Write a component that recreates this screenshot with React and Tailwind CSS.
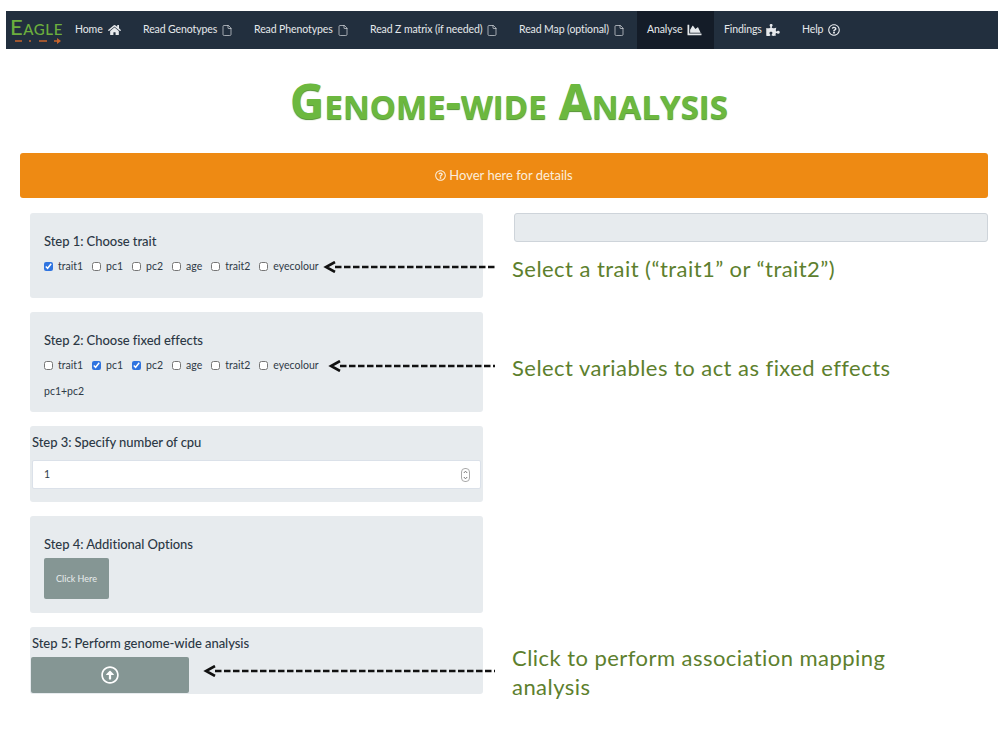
import { File } from 'lucide-react';
import { FaHome, FaChartArea, FaPuzzlePiece, FaRegQuestionCircle, FaRegArrowAltCircleUp } from 'react-icons/fa';

const traits = ['trait1', 'pc1', 'pc2', 'age', 'trait2', 'eyecolour'];

function NavItem({ label, icon, active, className }) {
  return (
    <div className={`flex h-full items-center gap-[4px] text-[10.5px] tracking-[-0.1px] text-[#e6e9ec] ${active ? 'bg-[#141c28]' : ''} ${className}`}>
      <span>{label}</span>
      {icon}
    </div>
  );
}

function Navbar() {
  const file = <File className="h-[13px] w-[12px]" strokeWidth={1.3} />;
  return (
    <div className="ml-[6px] mt-[11px] flex h-[38px] w-[992px] items-center bg-[#222f3e]">
      <div className="flex h-full w-[59px] flex-col pl-[4px] pt-[4px]">
        <span className="text-[22px] font-medium leading-[23px] tracking-[0.6px] text-[#6cae3d] [font-variant-caps:small-caps]">Eagle</span>
        <svg width="46" height="6" viewBox="0 0 46 6" className="ml-[5px]">
          <path d="M0 3h7M14 3h2M24 3h8M39 3h3" stroke="#c8642c" strokeWidth="1.5" />
          <path d="M42 0l4 3-4 3z" fill="#c8642c" />
        </svg>
      </div>
      <NavItem label="Home" icon={<FaHome className="ml-[1px] h-[12px] w-[13px]" />} className="w-[78px] pl-[10px]" />
      <NavItem label="Read Genotypes" icon={file} className="w-[111px]" />
      <NavItem label="Read Phenotypes" icon={file} className="w-[116px]" />
      <NavItem label="Read Z matrix (if needed)" icon={file} className="w-[149px]" />
      <NavItem label="Read Map (optional)" icon={file} className="w-[118px]" />
      <NavItem label="Analyse" icon={<FaChartArea className="h-[14px] w-[17px]" />} active className="w-[77px] pl-[10px]" />
      <NavItem label="Findings" icon={<FaPuzzlePiece className="h-[12px] w-[14px]" />} className="w-[88px] pl-[10px]" />
      <NavItem label="Help" icon={<FaRegQuestionCircle className="ml-[1px] h-[12px] w-[12px]" />} className="w-[60px]" />
    </div>
  );
}

function CheckRow({ checked }) {
  return (
    <div className="flex items-center text-[10.5px] leading-[14px] text-[#2f3a46]">
      {traits.map((t) => (
        <label key={t} className="mr-[9px] flex items-center gap-[5px]">
          <input type="checkbox" readOnly checked={checked.includes(t)} className="m-0 h-[9px] w-[9px] accent-[#2f74e0]" />
          <span>{t}</span>
        </label>
      ))}
    </div>
  );
}

function Panel({ children, className }) {
  return <div className={`rounded-[3px] bg-[#e7ebee] ${className}`}>{children}</div>;
}

function Heading({ children, className }) {
  return <div className={`text-[13px] font-medium leading-[16px] tracking-[-0.05px] text-[#2c3845] ${className}`}>{children}</div>;
}

function Arrow({ width, className }) {
  return (
    <svg className={`absolute ${className}`} width={width} height="12" viewBox={`0 0 ${width} 12`} fill="none">
      <path d={`M12 6H${width}`} stroke="#111" strokeWidth="2.4" strokeDasharray="6.5 2.5" />
      <path d="M12 1L3 6l9 5" stroke="#111" strokeWidth="2.6" />
    </svg>
  );
}

function Note({ children, className }) {
  return <div className={`absolute left-[512px] w-[390px] text-[22px] leading-[29px] tracking-[0.45px] text-[#5d7f2e] ${className}`}>{children}</div>;
}

export default function App() {
  return (
    <div className="relative h-[750px] w-[1000px] overflow-hidden bg-white font-['Lato','Open_Sans',sans-serif]">
      <Navbar />
      <h1 className="ml-[18px] mt-[22px] h-[60px] text-center font-['Open_Sans',sans-serif] text-[47.5px] font-bold leading-[60px] text-[#6cb83f] [font-variant-caps:small-caps] [text-shadow:0_1px_1px_#4d8f2b]">
        Genome-wide Analysis
      </h1>
      <div className="ml-[20px] mt-[22px] flex h-[45px] w-[968px] items-center justify-center gap-[3px] rounded-[3px] bg-[#ee8a13] text-[13px] text-[#fbeedd]">
        <FaRegQuestionCircle className="h-[11px] w-[11px]" />
        <span>Hover here for details</span>
      </div>
      <div className="ml-[30px] mt-[15px] flex items-start gap-[31px]">
        <div className="flex w-[453px] flex-col gap-[14px]">
          <Panel className="h-[85px] px-[14px] pt-[20px]">
            <Heading className="mb-[10px]">Step 1: Choose trait</Heading>
            <CheckRow checked={['trait1']} />
          </Panel>
          <Panel className="h-[100px] px-[14px] pt-[20px]">
            <Heading className="mb-[10px]">Step 2: Choose fixed effects</Heading>
            <CheckRow checked={['pc1', 'pc2']} />
            <div className="mt-[12px] text-[10.5px] leading-[14px] text-[#2f3a46]">pc1+pc2</div>
          </Panel>
          <Panel className="h-[76px] px-[2px] pt-[8px]">
            <Heading className="mb-[10px]">Step 3: Specify number of cpu</Heading>
            <div className="flex h-[29px] w-[449px] items-center justify-between rounded-[2px] border border-[#dbe1e9] bg-white pl-[11px] pr-[10px] text-[10.5px] text-[#2f3a46]">
              <span>1</span>
              <svg width="9" height="14" viewBox="0 0 9 14" fill="none" stroke="#777">
                <rect x="0.5" y="0.5" width="8" height="13" rx="3.5" stroke="#aaa" />
                <path d="M2.8 5L4.5 3.2 6.2 5M2.8 9l1.7 1.8L6.2 9" />
              </svg>
            </div>
          </Panel>
          <Panel className="h-[97px] px-[14px] pt-[20px]">
            <Heading className="mb-[6px]">Step 4: Additional Options</Heading>
            <div className="flex h-[41px] w-[65px] items-center justify-center rounded-[2px] bg-[#859694] text-[9px] text-[#e8eded]">Click Here</div>
          </Panel>
          <Panel className="h-[67px] px-[1px] pt-[8px]">
            <Heading className="mb-[6px] ml-[1px]">Step 5: Perform genome-wide analysis</Heading>
            <div className="flex h-[36px] w-[158px] items-center justify-center rounded-[2px] bg-[#859694] text-white">
              <FaRegArrowAltCircleUp className="h-[18px] w-[18px]" />
            </div>
          </Panel>
        </div>
        <div className="h-[29px] w-[474px] rounded-[3px] border border-[#ced4da] bg-[#e7ebee]" />
      </div>
      <Arrow width={172} className="left-[323px] top-[261px]" />
      <Arrow width={167} className="left-[328px] top-[360px]" />
      <Arrow width={292} className="left-[203px] top-[665px]" />
      <Note className="top-[254px]">Select a trait (“trait1” or “trait2”)</Note>
      <Note className="top-[353px]">Select variables to act as fixed effects</Note>
      <Note className="top-[643px]">Click to perform association mapping analysis</Note>
    </div>
  );
}
